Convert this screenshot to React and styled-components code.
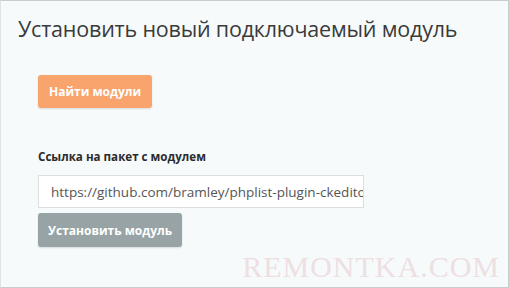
import React from 'react';
import styled, { createGlobalStyle } from 'styled-components';

const Global = createGlobalStyle`
  html, body {
    margin: 0;
    padding: 0;
    background: #f6fafb;
  }
  * { box-sizing: border-box; }
`;

const Page = styled.div`
  width: 509px;
  height: 288px;
  border: 1px solid #c9cdce;
  border-left-color: #dfe3e4;
  background: #f6fafb;
  font-family: 'Open Sans', 'Liberation Sans', sans-serif;
  display: flex;
  flex-direction: column;
  position: relative;
  overflow: hidden;
`;

const Title = styled.h1`
  margin: 0;
  padding: 13px 0 0 17px;
  font-size: 21.5px;
  font-weight: 400;
  color: #3a3a3a;
  letter-spacing: -0.2px;
  line-height: 30px;
`;

const Content = styled.div`
  display: flex;
  flex-direction: column;
  align-items: flex-start;
  padding: 31px 0 0 37px;
`;

const Button = styled.button`
  border: none;
  border-radius: 3px;
  background: ${p => p.$color};
  color: #fff;
  font-family: inherit;
  font-weight: 700;
  font-size: 12px;
  height: ${p => p.$h}px;
  padding: 0 ${p => p.$px}px;
  cursor: pointer;
  box-shadow: 0 1px 2px rgba(0, 0, 0, 0.12);
`;

const Label = styled.label`
  margin-top: 40px;
  font-size: 11.6px;
  font-weight: 700;
  color: #2b2b2b;
  line-height: 18px;
`;

const Input = styled.input`
  margin-top: 9px;
  width: 326px;
  height: 33px;
  border: 1px solid #dcdfe0;
  background: #fff;
  padding: 0 0 0 12px;
  font-family: inherit;
  font-size: 13.5px;
  color: #555;
  outline: none;
`;

const Gap = styled.div`
  height: 5px;
`;

const Watermark = styled.div`
  position: absolute;
  right: 8px;
  bottom: 3px;
  font-family: 'Liberation Serif', serif;
  font-size: 30px;
  letter-spacing: 1px;
  color: #eedfe2;
`;

export default function App() {
  return (
    <>
      <Global />
      <Page>
        <Title>Установить новый подключаемый модуль</Title>
        <Content>
          <Button $color="#f8a46c" $h={33} $px={11}>Найти модули</Button>
          <Label>Ссылка на пакет с модулем</Label>
          <Input readOnly value="https://github.com/bramley/phplist-plugin-ckeditor" />
          <Gap />
          <Button $color="#97a3a5" $h={34} $px={10}>Установить модуль</Button>
        </Content>
        <Watermark>REMONTKA.COM</Watermark>
      </Page>
    </>
  );
}
